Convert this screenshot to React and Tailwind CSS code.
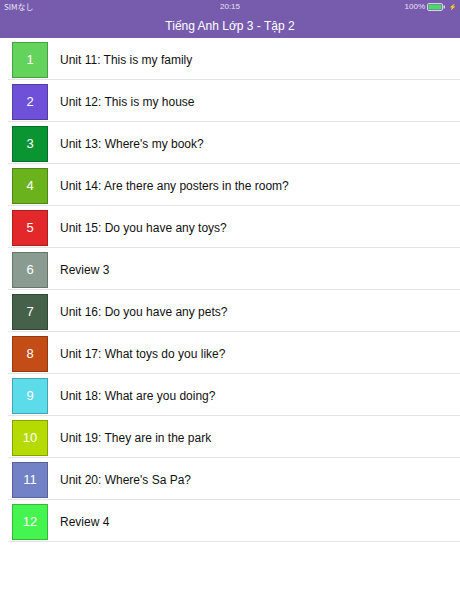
const UNITS = [
  { n: "1", title: "Unit 11: This is my family", bg: "bg-[#63d35c]" },
  { n: "2", title: "Unit 12: This is my house", bg: "bg-[#6f50d9]" },
  { n: "3", title: "Unit 13: Where's my book?", bg: "bg-[#0a9432]" },
  { n: "4", title: "Unit 14: Are there any posters in the room?", bg: "bg-[#6ab31d]" },
  { n: "5", title: "Unit 15: Do you have any toys?", bg: "bg-[#e3282b]" },
  { n: "6", title: "Review 3", bg: "bg-[#8a9c92]" },
  { n: "7", title: "Unit 16: Do you have any pets?", bg: "bg-[#45614a]" },
  { n: "8", title: "Unit 17: What toys do you like?", bg: "bg-[#c44c16]" },
  { n: "9", title: "Unit 18: What are you doing?", bg: "bg-[#5cdbea]" },
  { n: "10", title: "Unit 19: They are in the park", bg: "bg-[#b5da00]" },
  { n: "11", title: "Unit 20: Where's Sa Pa?", bg: "bg-[#7382c7]" },
  { n: "12", title: "Review 4", bg: "bg-[#46f44f]" },
];

function Battery() {
  return (
    <svg width="20" height="8" viewBox="0 0 20 8">
      <rect x="0.5" y="0.5" width="15" height="7" rx="1.5" fill="none" stroke="#d9d2ec" />
      <rect x="1.5" y="1.5" width="13" height="5" rx="0.5" fill="#4cd964" />
      <rect x="16.5" y="2.5" width="1.5" height="3" fill="#d9d2ec" />
    </svg>
  );
}

export default function App() {
  return (
    <div className="min-h-[614px] w-[460px] bg-white font-['Liberation_Sans',Arial,sans-serif]">
      <div className="h-[38px] bg-[#775cae] text-white">
        <div className="flex h-[13px] items-center justify-between px-[4px] pt-[1px] text-[8px] text-[#e8e2f4]">
          <span className="w-[60px] font-['Noto_Sans_CJK_JP','Liberation_Sans',sans-serif]">SIMなし</span>
          <span>20:15</span>
          <span className="flex w-[60px] items-center justify-end gap-[2px]">
            100%
            <Battery />
            <span className="text-[6px]">⚡</span>
          </span>
        </div>
        <div className="flex h-[25px] items-center justify-center pt-[1px] text-[12px]">
          Tiếng Anh Lớp 3 - Tập 2
        </div>
      </div>
      <ul>
        {UNITS.map((u) => (
          <li key={u.n} className="ml-[8px] flex h-[42px] items-center border-b border-[#e4e4e6] pt-[2px]">
            <div
              className={`ml-[4px] flex h-[36px] w-[36px] shrink-0 items-center justify-center border border-black/25 ${u.bg} text-[13px] font-medium text-white`}
            >
              {u.n}
            </div>
            <span className="ml-[12px] text-[12px] text-[#111]">{u.title}</span>
          </li>
        ))}
      </ul>
    </div>
  );
}
